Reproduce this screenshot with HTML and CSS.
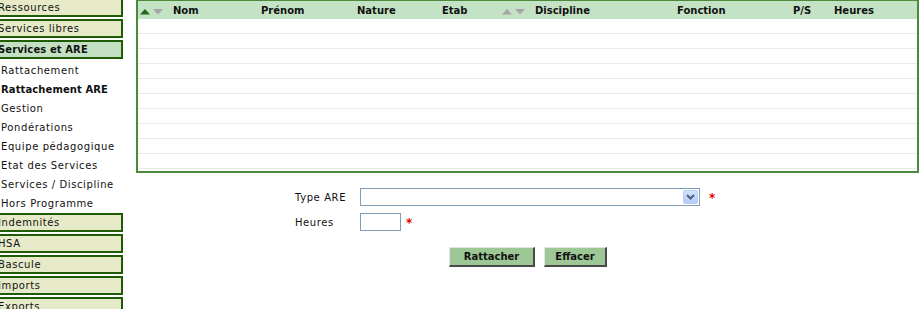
FILE: index.html
```html
<!DOCTYPE html>
<html lang="fr">
<head>
<meta charset="utf-8">
<title>Rattachement ARE</title>
<link rel="stylesheet" href="styles.css">
</head>
<body>
<div class="page">
  <nav class="sidebar">
    <div class="box">Ressources</div>
    <div class="box">Services libres</div>
    <div class="box box-active">Services et ARE</div>
    <div class="sub">Rattachement</div>
    <div class="sub sub-active">Rattachement ARE</div>
    <div class="sub">Gestion</div>
    <div class="sub">Pondérations</div>
    <div class="sub">Equipe pédagogique</div>
    <div class="sub">Etat des Services</div>
    <div class="sub">Services / Discipline</div>
    <div class="sub">Hors Programme</div>
    <div class="box">Indemnités</div>
    <div class="box">HSA</div>
    <div class="box">Bascule</div>
    <div class="box">Imports</div>
    <div class="box">Exports</div>
  </nav>
  <main class="content">
    <div class="grid">
      <div class="grid-head">
        <div class="col col-arrows">
          <svg width="24" height="7" viewBox="0 0 24 7"><polygon points="0,6.5 5,1 10,6.5" fill="#1c6b1c"/><polygon points="13,1 23,1 18,6.5" fill="#a6a6a6"/></svg>
        </div>
        <div class="col">Nom</div>
        <div class="col">Prénom</div>
        <div class="col">Nature</div>
        <div class="col">Etab</div>
        <div class="col col-arrows">
          <svg width="24" height="7" viewBox="0 0 24 7"><polygon points="0,6.5 5,1 10,6.5" fill="#a6a6a6"/><polygon points="13,1 23,1 18,6.5" fill="#a6a6a6"/></svg>
        </div>
        <div class="col">Discipline</div>
        <div class="col">Fonction</div>
        <div class="col">P/S</div>
        <div class="col">Heures</div>
      </div>
      <div class="row"></div>
      <div class="row"></div>
      <div class="row"></div>
      <div class="row"></div>
      <div class="row"></div>
      <div class="row"></div>
      <div class="row"></div>
      <div class="row"></div>
      <div class="row"></div>
      <div class="row"></div>
    </div>
    <form class="form">
      <div class="field">
        <label class="label">Type ARE</label>
        <div class="select-wrap">
          <select class="select"><option></option></select>
          <span class="select-btn">
            <svg width="9" height="6" viewBox="0 0 9 6"><polyline points="1,1 4.5,4.5 8,1" fill="none" stroke="#4d6185" stroke-width="2"/></svg>
          </span>
        </div>
        <span class="req">*</span>
      </div>
      <div class="field">
        <label class="label">Heures</label>
        <input class="input" type="text">
        <span class="req req-near">*</span>
      </div>
      <div class="actions">
        <button type="button" class="btn btn-wide">Rattacher</button>
        <button type="button" class="btn">Effacer</button>
      </div>
    </form>
  </main>
</div>
</body>
</html>
```
FILE: styles.css
```css
html, body {
  margin: 0;
  padding: 0;
  background: #fff;
  overflow: hidden;
}
body {
  font-family: "DejaVu Sans", Verdana, sans-serif;
  font-size: 10px;
  color: #111;
}
.page {
  display: flex;
  align-items: flex-start;
}
.sidebar {
  width: 130px;
  margin-left: -7px;
  margin-top: -2px;
  flex-shrink: 0;
  display: flex;
  flex-direction: column;
  letter-spacing: 0.6px;
}
.box {
  height: 15px;
  line-height: 15px;
  border: 2px solid #1f5c05;
  background: #e6eac9;
  padding-left: 3px;
  margin-bottom: 2px;
  white-space: nowrap;
  overflow: hidden;
}
.box-active {
  background: #c3e1c2;
  font-weight: bold;
  letter-spacing: 0.1px;
}
.sub {
  height: 19px;
  line-height: 19px;
  padding-left: 8px;
  white-space: nowrap;
}
.sub-active {
  font-weight: bold;
  letter-spacing: 0.1px;
}
.content {
  margin-left: 13px;
  flex: 1;
  min-width: 0;
}
.grid {
  border: 2px solid #4b8a3c;
  border-top-width: 1px;
  box-sizing: border-box;
  height: 173px;
  overflow: hidden;
}
.grid-head {
  display: grid;
  grid-template-columns: 33px 88px 96px 85px 60px 33px 142px 116px 41px 1fr;
  padding-left: 2px;
  height: 18px;
  background: #c4e2c4;
  border-top: 1px solid #c4e2c4;
  box-sizing: border-box;
  align-items: center;
  font-weight: bold;
  white-space: nowrap;
}
.col {
  line-height: 16px;
  padding-top: 1px;
}
.col-arrows {
  display: flex;
  align-items: center;
}
.row {
  height: 14px;
  border-bottom: 1px solid #e9e9e9;
}
.form {
  margin-left: 159px;
  margin-top: 15px;
}
.field {
  display: flex;
  align-items: center;
  height: 18px;
  margin-bottom: 7px;
}
.label {
  width: 65px;
  letter-spacing: 0.6px;
}
.select-wrap {
  position: relative;
  width: 340px;
  height: 18px;
}
.select {
  appearance: none;
  -webkit-appearance: none;
  width: 340px;
  height: 18px;
  border: 1px solid #7f9db9;
  background: #fff;
  margin: 0;
  padding: 0;
  border-radius: 0;
  box-sizing: border-box;
  font: inherit;
}
.select-btn {
  position: absolute;
  right: 2px;
  top: 2px;
  width: 15px;
  height: 14px;
  border-radius: 2px;
  background: linear-gradient(#d3e2fd, #b4cbf7);
  border: 1px solid #b8cdf4;
  box-sizing: border-box;
  display: flex;
  align-items: center;
  justify-content: center;
}
.req {
  color: #e00000;
  font-weight: bold;
  font-size: 12px;
  margin-left: 9px;
  line-height: 18px;
  position: relative;
  top: 1px;
}
.req-near {
  margin-left: 5px;
}
.input {
  width: 41px;
  height: 18px;
  border: 1px solid #7f9db9;
  box-sizing: border-box;
  margin: 0;
  padding: 0 2px;
  font: inherit;
}
.actions {
  display: flex;
  gap: 9px;
  margin-top: 16px;
  margin-left: 154px;
}
.btn {
  height: 20px;
  width: 63px;
  padding: 0;
  margin: 0;
  background: #9dc794;
  border: 1px solid;
  border-color: #e4e4e4 #4a4a4a #4a4a4a #e4e4e4;
  border-width: 1px 2px 2px 1px;
  font-family: "DejaVu Sans", Verdana, sans-serif;
  font-weight: bold;
  font-size: 10px;
  color: #111;
  box-sizing: border-box;
}
.btn-wide {
  width: 86px;
}
```
